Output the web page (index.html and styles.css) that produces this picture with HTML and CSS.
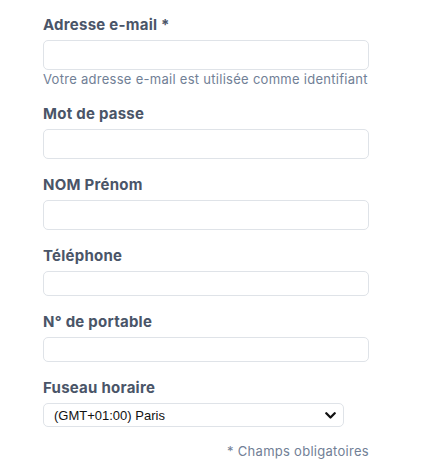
FILE: index.html
```html
<!DOCTYPE html>
<html lang="fr">
<head>
<meta charset="utf-8">
<link rel="stylesheet" href="styles.css">
</head>
<body>
<form class="form">
  <div class="field">
    <label class="label">Adresse e-mail *</label>
    <input class="input" type="email">
    <p class="help">Votre adresse e-mail est utilisée comme identifiant</p>
  </div>
  <div class="field">
    <label class="label">Mot de passe</label>
    <input class="input" type="password">
  </div>
  <div class="field">
    <label class="label">NOM Prénom</label>
    <input class="input" type="text">
  </div>
  <div class="field">
    <label class="label">Téléphone</label>
    <input class="input input-sm" type="text">
  </div>
  <div class="field">
    <label class="label">N° de portable</label>
    <input class="input input-sm" type="text">
  </div>
  <div class="field">
    <label class="label">Fuseau horaire</label>
    <div class="select-wrap">
      <select class="select">
        <option>(GMT+01:00) Paris</option>
      </select>
      <svg class="chevron" width="11" height="7" viewBox="0 0 11 7"><path d="M1.3 1.3 L5.5 5.5 L9.7 1.3" fill="none" stroke="#111" stroke-width="2.3" stroke-linecap="round" stroke-linejoin="round"/></svg>
    </div>
  </div>
  <p class="note">* Champs obligatoires</p>
</form>
</body>
</html>
```

FILE: styles.css
```css
html, body {
  margin: 0;
  padding: 0;
  background: #ffffff;
}
body {
  font-family: Inter, "Noto Sans", "Liberation Sans", sans-serif;
}
.form {
  width: 326px;
  margin: 0 0 0 43px;
  padding-top: 15px;
  display: flex;
  flex-direction: column;
  gap: 16px;
}
.field {
  display: flex;
  flex-direction: column;
}
.label {
  display: block;
  font-size: 15px;
  font-weight: 700;
  line-height: 20px;
  color: #4a5568;
  margin-bottom: 5px;
  letter-spacing: 0.25px;
}
.input {
  box-sizing: border-box;
  display: block;
  width: 326px;
  height: 30px;
  margin: 0;
  border: 1px solid #dfe3e8;
  border-radius: 5px;
  background: #fff;
  padding: 0 8px;
  outline: none;
}
.input-sm {
  height: 25px;
}
.help {
  margin: 1px 0 0;
  font-size: 13px;
  line-height: 17px;
  color: #718096;
  letter-spacing: 0.28px;
  white-space: nowrap;
}
.select-wrap {
  position: relative;
  width: 301px;
}
.select {
  box-sizing: border-box;
  display: block;
  width: 301px;
  height: 24px;
  margin: 0;
  -webkit-appearance: none;
  appearance: none;
  border: 1px solid #dfe3e8;
  border-radius: 5px;
  background: #fff;
  padding: 0 0 0 10px;
  font-family: "Liberation Sans", Arial, sans-serif;
  font-size: 13px;
  color: #111;
  outline: none;
}
.chevron {
  position: absolute;
  right: 8px;
  top: 9px;
  pointer-events: none;
}
.note {
  margin: -1px 0 0;
  text-align: right;
  font-size: 13px;
  line-height: 18px;
  color: #718096;
  letter-spacing: 0.28px;
}
```
